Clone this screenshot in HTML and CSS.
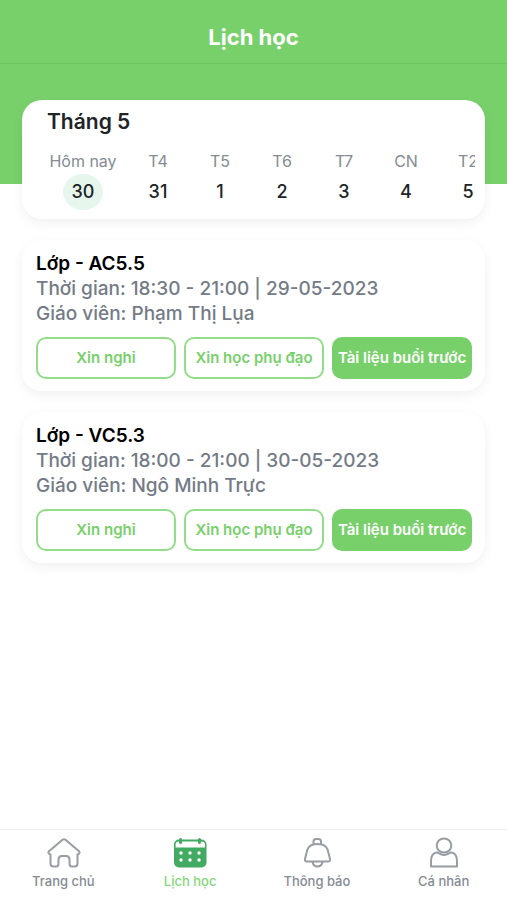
FILE: index.html
```html
<!DOCTYPE html>
<html lang="vi">
<head>
<meta charset="utf-8">
<meta name="viewport" content="width=device-width, initial-scale=1">
<title>Lịch học</title>
<link rel="stylesheet" href="styles.css">
</head>
<body>
<header class="topbar"><h1>Lịch học</h1></header>
<div class="hero"></div>
<main class="content">
  <section class="card calendar">
    <h2>Tháng 5</h2>
    <ol class="days">
      <li class="day today"><span class="name">Hôm nay</span><span class="date">30</span></li>
      <li class="day"><span class="name">T4</span><span class="date">31</span></li>
      <li class="day"><span class="name">T5</span><span class="date">1</span></li>
      <li class="day"><span class="name">T6</span><span class="date">2</span></li>
      <li class="day"><span class="name">T7</span><span class="date">3</span></li>
      <li class="day"><span class="name">CN</span><span class="date">4</span></li>
      <li class="day"><span class="name">T2</span><span class="date">5</span></li>
    </ol>
  </section>
  <article class="card lesson">
    <h3>Lớp - AC5.5</h3>
    <p>Thời gian: 18:30 - 21:00 | 29-05-2023</p>
    <p>Giáo viên: Phạm Thị Lụa</p>
    <div class="actions">
      <button type="button">Xin nghỉ</button>
      <button type="button">Xin học phụ đạo</button>
      <button type="button" class="primary">Tài liệu buổi trước</button>
    </div>
  </article>
  <article class="card lesson">
    <h3>Lớp - VC5.3</h3>
    <p>Thời gian: 18:00 - 21:00 | 30-05-2023</p>
    <p>Giáo viên: Ngô Minh Trực</p>
    <div class="actions">
      <button type="button">Xin nghỉ</button>
      <button type="button">Xin học phụ đạo</button>
      <button type="button" class="primary">Tài liệu buổi trước</button>
    </div>
  </article>
</main>
<nav class="tabs">
  <a href="#home">
    <svg viewBox="0 0 36 32" aria-hidden="true"><path d="M17.500 2.800 Q19 1.600 20.500 2.800 L34 14.200 Q35.400 16 33.600 17 L32.500 17.400 V26.500 Q32.500 29.500 29.500 29.500 H27 Q24.500 29.500 24.500 27 V23 Q24.500 19 21 19 H17 Q13.500 19 13.500 23 V27 Q13.500 29.500 11 29.500 H8.500 Q5.500 29.500 5.500 26.500 V17.400 L4.400 17 Q2.600 16 4 14.200 Z"/></svg>
    <span>Trang chủ</span>
  </a>
  <a href="#schedule" class="active" aria-current="page">
    <svg viewBox="0 0 36 32" aria-hidden="true"><rect class="fill" x="2" y="2.500" width="32.500" height="28" rx="5"/><path class="gap" d="M3.600 10.500 V7.500 Q3.600 4.500 7 4.500 H29.500 Q33 4.500 33 7.500 V10.500 Z"/><path class="pin" d="M8.500 2.500V5.500M27.500 2.500V5.500"/><g class="dots"><circle cx="9" cy="16" r="1.700"/><circle cx="18" cy="16" r="1.700"/><circle cx="27" cy="16" r="1.700"/><circle cx="9" cy="23" r="1.700"/><circle cx="18" cy="23" r="1.700"/><circle cx="27" cy="23" r="1.700"/></g></svg>
    <span>Lịch học</span>
  </a>
  <a href="#notifications">
    <svg viewBox="0 0 36 32" aria-hidden="true"><path d="M14.500 7 V4.500 Q14.500 2 17 2 H19.500 Q22 2 22 4.500 V7 M14 7.500 Q18.500 6.500 23 7.500 Q28.500 9 29.500 16 L31 22 Q31.500 24.500 29 24.500 H8 Q5.500 24.500 6 22 L7.500 16 Q8.500 9 14 7.500 Z M13.500 25 Q14.500 29.500 18.500 29.500 Q22.500 29.500 23.500 25"/></svg>
    <span>Thông báo</span>
  </a>
  <a href="#profile">
    <svg viewBox="0 0 36 32" aria-hidden="true"><ellipse cx="18" cy="8.500" rx="7.300" ry="7"/><path d="M5 29.500 V24 Q5 16.500 10.500 15.500 Q12 15.300 13 16.300 Q18 19.500 23 16.300 Q24 15.300 25.500 15.500 Q31 16.500 31 24 V29.500 Z"/></svg>
    <span>Cá nhân</span>
  </a>
</nav>
</body>
</html>
```
FILE: styles.css
```css
* { box-sizing: border-box; }
body {
  margin: 0;
  min-height: 100vh;
  display: flex;
  flex-direction: column;
  background: #fff;
  color: #202427;
  font-family: Inter, "Noto Sans", sans-serif;
}
h1, h2, h3, p, ol { margin: 0; padding: 0; }
.topbar {
  height: 64px;
  padding-top: 10px;
  display: flex;
  align-items: center;
  justify-content: center;
  background: #78d06b;
  border-bottom: 1px solid #6ec363;
}
.topbar h1 { color: #fff; font-size: 22px; line-height: 28px; font-weight: 700; }
.hero { height: 120px; background: #78d06b; }
.content {
  flex: 1;
  display: flex;
  flex-direction: column;
  gap: 21px;
  margin-top: -84px;
  padding: 0 22px 24px;
}
.card {
  background: #fff;
  border-radius: 20px;
  box-shadow: 0 4px 12px rgba(0, 0, 0, .06);
}
.calendar { padding: 8px 10px 9px 17px; }
.calendar h2 { padding-left: 8px; font-size: 21px; line-height: 28px; font-weight: 600; }
.days {
  display: flex;
  margin-top: 14px;
  list-style: none;
  overflow: hidden;
}
.day {
  flex: 0 0 62px;
  display: flex;
  flex-direction: column;
  align-items: center;
  gap: 2px;
}
.today { flex-basis: 88px; }
.name { color: #858b91; font-size: 16px; line-height: 22px; white-space: nowrap; }
.date {
  width: 40px;
  line-height: 36px;
  border-radius: 50%;
  text-align: center;
  font-size: 18px;
  font-weight: 500;
}
.today .date { background: #e6f6ed; }
.lesson { padding: 11px 13px 12px 14px; }
.lesson h3 { color: #000; font-size: 19px; line-height: 25px; font-weight: 600; }
.lesson p { color: #747b86; font-size: 19px; line-height: 25px; font-weight: 500; }
.actions {
  display: grid;
  grid-template-columns: repeat(3, minmax(0, 1fr));
  gap: 8px;
  margin-top: 11px;
}
.actions button {
  height: 42px;
  padding: 0;
  border: 2px solid #93dc8a;
  border-radius: 10px;
  background: #fff;
  color: #78d06b;
  font: 600 15px/20px Inter, "Noto Sans", sans-serif;
  white-space: nowrap;
}
.actions .primary { background: #78d06b; border-color: #78d06b; color: #fff; }
.tabs {
  display: grid;
  grid-template-columns: repeat(4, 1fr);
  height: 71px;
  padding-top: 7px;
  border-top: 1px solid #efefef;
}
.tabs a {
  display: flex;
  flex-direction: column;
  align-items: center;
  gap: 3px;
  color: #858b92;
  font-size: 13px;
  line-height: 18px;
  font-weight: 500;
  text-decoration: none;
}
.tabs svg { width: 36px; height: 32px; fill: none; stroke: #979da3; stroke-width: 2; stroke-linejoin: round; }
.tabs .active { color: #85d87b; }
.tabs .fill { fill: #43aa62; stroke: none; }
.tabs .gap, .tabs .dots { fill: #fff; stroke: none; }
.tabs .pin { stroke: #43aa62; stroke-width: 3; stroke-linecap: round; }
```
